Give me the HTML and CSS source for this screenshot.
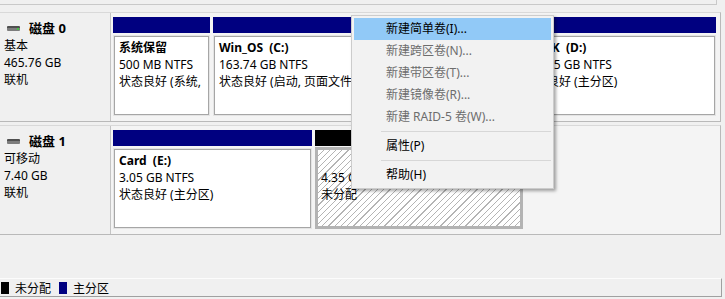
FILE: index.html
```html
<!DOCTYPE html>
<html lang="zh-CN">
<head>
    <meta charset="UTF-8">
    <title>磁盘管理</title>
    <link rel="stylesheet" href="styles.css">
</head>
<body>
    <div class="view">
        <div class="top-edge"></div>

        <div class="disk-row">
            <div class="disk-label">
                <div class="disk-name"><span class="disk-icon"><i></i></span>磁盘 0</div>
                <div>基本</div>
                <div>465.76 GB</div>
                <div>联机</div>
            </div>
            <div class="parts">
                <div class="part primary sys">
                    <div class="bar"></div>
                    <div class="box">
                        <div class="title">系统保留</div>
                        <div>500 MB NTFS</div>
                        <div>状态良好 (系统,</div>
                    </div>
                </div>
                <div class="part primary os">
                    <div class="bar"></div>
                    <div class="box">
                        <div class="title">Win_OS&nbsp;&nbsp;(C:)</div>
                        <div>163.74 GB NTFS</div>
                        <div>状态良好 (启动, 页面文件</div>
                    </div>
                </div>
                <div class="part primary data">
                    <div class="bar"></div>
                    <div class="box">
                        <div class="title">WORK&nbsp;&nbsp;(D:)</div>
                        <div>301.55 GB NTFS</div>
                        <div>状态良好 (主分区)</div>
                    </div>
                </div>
            </div>
        </div>

        <div class="disk-row">
            <div class="disk-label">
                <div class="disk-name"><span class="disk-icon removable"><i></i></span>磁盘 1</div>
                <div>可移动</div>
                <div>7.40 GB</div>
                <div>联机</div>
            </div>
            <div class="parts">
                <div class="part primary card">
                    <div class="bar"></div>
                    <div class="box">
                        <div class="title">Card&nbsp;&nbsp;(E:)</div>
                        <div>3.05 GB NTFS</div>
                        <div>状态良好 (主分区)</div>
                    </div>
                </div>
                <div class="part free">
                    <div class="bar"></div>
                    <div class="box">
                        <div class="title">&nbsp;</div>
                        <div>4.35 GB</div>
                        <div>未分配</div>
                    </div>
                </div>
            </div>
        </div>

        <div class="filler"></div>

        <div class="legend">
            <span class="swatch black"></span>未分配
            <span class="swatch navy"></span>主分区
        </div>

        <ul class="context-menu">
            <li class="active">新建简单卷(I)...</li>
            <li class="disabled">新建跨区卷(N)...</li>
            <li class="disabled">新建带区卷(T)...</li>
            <li class="disabled">新建镜像卷(R)...</li>
            <li class="disabled">新建 RAID-5 卷(W)...</li>
            <li class="sep"></li>
            <li>属性(P)</li>
            <li class="sep"></li>
            <li>帮助(H)</li>
        </ul>
    </div>
</body>
</html>
```

FILE: styles.css
```css
* {
    margin: 0;
    padding: 0;
    box-sizing: border-box;
}

body {
    font-family: "Noto Sans", "Noto Sans CJK SC", sans-serif;
    font-size: 12px;
    color: #000;
    background: #f0f0f0;
    overflow: hidden;
}

.view {
    position: relative;
    width: 725px;
    height: 299px;
    display: flex;
    flex-direction: column;
}

.top-edge {
    height: 5px;
    margin-right: 8px;
    border-bottom: 1px solid #c9c9c9;
    border-right: 1px solid #c9c9c9;
    margin-bottom: 7px;
}

.disk-row {
    display: flex;
    height: 110px;
    margin-right: 4px;
    margin-bottom: 3px;
    border-top: 1px solid #d9d9d9;
    border-bottom: 1px solid #b9b9b9;
    border-right: 1px solid #b9b9b9;
}

.disk-label {
    width: 111px;
    padding: 7px 0 0 4px;
    line-height: 17px;
    border-right: 1px solid #c4c4c4;
}

.disk-name {
    display: flex;
    align-items: center;
    font-weight: bold;
    font-size: 13px;
}

.disk-icon {
    position: relative;
    width: 13px;
    height: 5px;
    margin: 0 9px 0 3px;
    background: #7d7d7d;
    border-top: 2px solid #4f4f4f;
    border-radius: 1px;
}

.disk-icon i {
    position: absolute;
    right: 1px;
    top: 0;
    width: 2px;
    height: 2px;
    background: #46c346;
}

.disk-icon.removable i {
    display: none;
}

.parts {
    flex: 1;
    display: flex;
    gap: 3px;
    padding: 4px 3px 5px 2px;
    background: #f4f4f4;
}

.part {
    display: flex;
    flex-direction: column;
}

.sys { width: 97px; }
.os { width: 301px; }
.data { width: 199px; }
.card { width: 199px; }
.free { width: 208px; }

.bar {
    height: 16px;
    background: #000080;
}

.free .bar {
    background: #000;
}

.box {
    flex: 1;
    margin-top: 2px;
    padding: 3px 5px 0 5px;
    line-height: 17px;
    white-space: nowrap;
    overflow: hidden;
    background: #fff;
    border: 1px solid #e4e4e4;
    box-shadow: inset 1px 1px 0 #a6a6a6, inset -1px -1px 0 #a6a6a6;
}

.box .title {
    font-weight: bold;
}

.free .box {
    margin-top: 1px;
    padding: 2px 3px 0 3px;
    border: 3px solid #b3b3b3;
    box-shadow: none;
    background: repeating-linear-gradient(135deg, #fff 0, #fff 3.6px, #b4b4b4 3.6px, #b4b4b4 4.4px);
}

.filler {
    flex: 1;
}

.legend {
    display: flex;
    align-items: center;
    height: 19px;
    margin-bottom: 2px;
    margin-right: 3px;
    border-top: 1px solid #fcfcfc;
    border-bottom: 1px solid #a0a0a0;
    border-right: 1px solid #a0a0a0;
    font-family: "Noto Sans CJK SC", sans-serif;
    font-size: 12px;
}

.swatch {
    width: 8px;
    height: 12px;
    margin: 0 6px 0 1px;
}

.swatch.black { background: #000; }
.swatch.navy { background: #000080; margin-left: 8px; }

.context-menu {
    position: absolute;
    left: 351px;
    top: 15px;
    width: 203px;
    padding: 2px;
    list-style: none;
    background: #f2f2f2;
    border: 1px solid #cccccc;
    box-shadow: 2px 2px 3px rgba(0, 0, 0, 0.35);
    font-family: "Noto Sans", "Noto Sans CJK SC", sans-serif;
}

.context-menu li {
    height: 22px;
    line-height: 22px;
    padding-left: 32px;
}

.context-menu li.active {
    background: #91c9f7;
}

.context-menu li.disabled {
    color: #6d6d6d;
}

.context-menu li.sep {
    height: 7px;
    margin-left: 27px;
    padding: 0;
    background: linear-gradient(#f2f2f2 3px, #d7d7d7 3px, #d7d7d7 4px, #f2f2f2 4px);
}
```
